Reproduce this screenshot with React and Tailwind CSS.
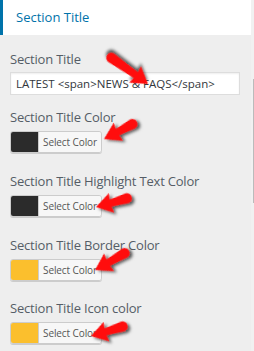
const FONT = { fontFamily: '"Open Sans", "Noto Sans", sans-serif' }

const FIELDS = [
  { label: 'Section Title Color', color: 'bg-[#2b2b2b]', top: 'mt-[13px]' },
  { label: 'Section Title Highlight Text Color', color: 'bg-[#2b2b2b]', top: 'mt-[19px]' },
  { label: 'Section Title Border Color', color: 'bg-[#fbbf2d]', top: 'mt-[19px]' },
  { label: 'Section Title Icon color', color: 'bg-[#fbbf2d]', top: 'mt-[18px]' },
]

// tip x, tip y, angle (deg) to tail, length
const ARROWS = [
  [148, 84, -144, 50],
  [104, 139, -27, 37],
  [96, 207, -15, 37],
  [95, 270, -29, 39],
  [91, 336, -16, 38],
]

function arrowPath(len) {
  return `M0,0 L16,-10 L15,-3.6 L${len - 5},-5.4 A5,5 0 0 1 ${len - 5},4.6 L15,3.6 L16,10 Z`
}

function ColorButton({ color }) {
  return (
    <div className="flex h-[22px] w-[92px] overflow-hidden rounded-[3px] border border-[#cccccc] shadow-[0_1px_0_#cccccc]">
      <div className={`w-[27px] h-full ${color}`} />
      <div className="flex flex-1 items-center justify-center border-l border-[#cccccc] bg-[#f7f7f7] text-[10px] tracking-[-0.1px] text-[#555555]">
        Select Color
      </div>
    </div>
  )
}

export default function App() {
  return (
    <div className="relative flex h-[351px] w-[254px] overflow-hidden bg-[#eeeeee]" style={FONT}>
      <div className="w-[251px]">
        <div className="flex h-[35px] items-center border-l-[3px] border-[#0073aa] bg-white pl-[13px] text-[13px] text-[#0073aa]">
          Section Title
        </div>

        <div className="pl-[10px]">
          <div className="mt-[15px] h-[18px] text-[13px] leading-[18px] tracking-[-0.2px] text-[#555d66]">Section Title</div>
          <div className="mt-[4px] flex h-[23px] w-[230px] items-center border border-[#dddddd] bg-white pl-[5px] text-[11.5px] text-[#32373c] shadow-[inset_0_1px_2px_rgba(0,0,0,0.07)]">
            LATEST &lt;span&gt;NEWS &amp; FAQS&lt;/span&gt;
          </div>

          {FIELDS.map((f) => (
            <div key={f.label} className={f.top}>
              <div className="h-[18px] text-[13px] leading-[18px] tracking-[-0.2px] text-[#555d66]">{f.label}</div>
              <div className="mt-[5px]">
                <ColorButton color={f.color} />
              </div>
            </div>
          ))}
        </div>
      </div>

      <div className="w-[3px] bg-[#f1f1f1] pt-[79px]">
        <div className="ml-[2px] h-[124px] w-[1px] bg-[#bbbbbb]" />
      </div>

      <svg className="pointer-events-none absolute left-0 top-0" width="254" height="351">
        <defs>
          <filter id="sh" x="-30%" y="-30%" width="160%" height="160%">
            <feDropShadow dx="2" dy="2.5" stdDeviation="1.4" floodColor="#000" floodOpacity="0.65" />
          </filter>
        </defs>
        {ARROWS.map(([x, y, a, len], i) => (
          <path key={i} d={arrowPath(len)} fill="#ff0a0a" filter="url(#sh)" transform={`translate(${x},${y}) rotate(${a})`} />
        ))}
      </svg>
    </div>
  )
}
